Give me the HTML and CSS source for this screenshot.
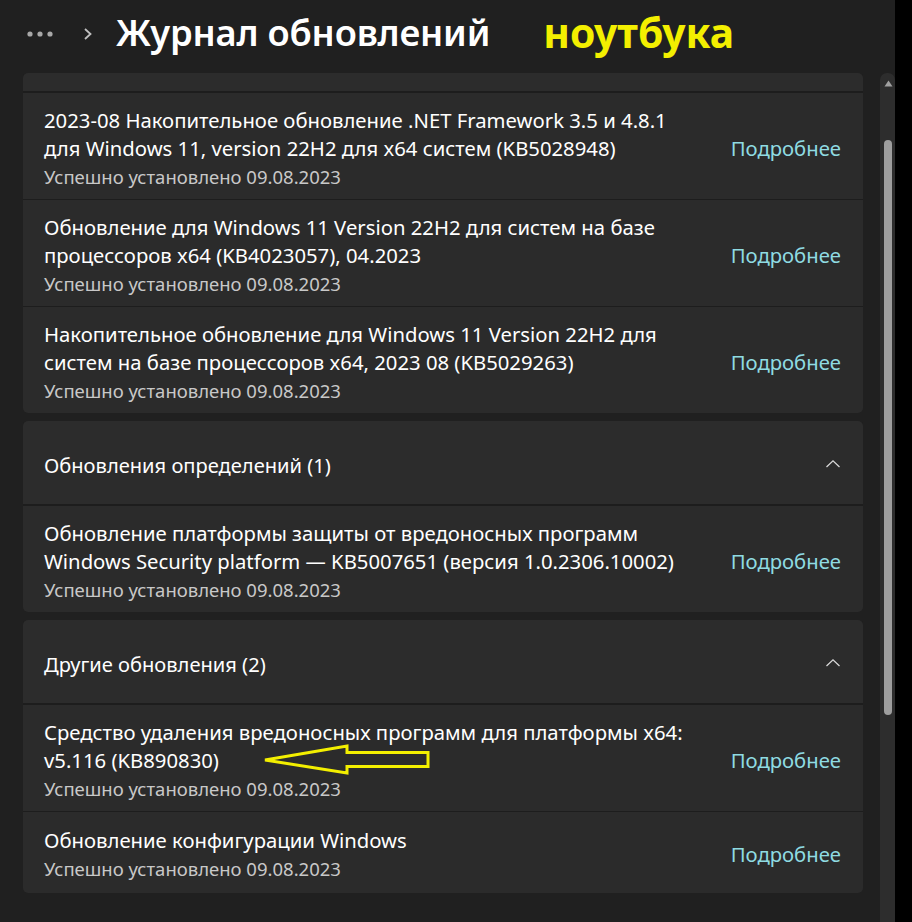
FILE: index.html
```html
<!DOCTYPE html>
<html lang="ru">
<head>
<meta charset="utf-8">
<title>Журнал обновлений</title>
<link rel="stylesheet" href="styles.css">
</head>
<body>
<div class="window">
  <div class="main">
    <header class="topbar">
      <svg class="dots" width="26" height="8" viewBox="0 0 26 8"><circle cx="3" cy="4" r="2.6"/><circle cx="13" cy="4" r="2.6"/><circle cx="23" cy="4" r="2.6"/></svg>
      <svg class="crumb" width="12" height="14" viewBox="0 0 12 14"><path d="M3 2 L8.5 7 L3 12" /></svg>
      <h1 class="title">Журнал обновлений</h1>
      <span class="note">ноутбука</span>
    </header>

    <div class="list">
      <section class="group">
        <div class="group-head partial"></div>
        <div class="row">
          <div class="info">
            <div class="name">2023-08 Накопительное обновление .NET Framework 3.5 и 4.8.1<br>для Windows 11, version 22H2 для x64 систем (KB5028948)</div>
            <div class="status">Успешно установлено 09.08.2023</div>
          </div>
          <a class="more">Подробнее</a>
        </div>
        <div class="row">
          <div class="info">
            <div class="name">Обновление для Windows 11 Version 22H2 для систем на базе<br>процессоров x64 (KB4023057), 04.2023</div>
            <div class="status">Успешно установлено 09.08.2023</div>
          </div>
          <a class="more">Подробнее</a>
        </div>
        <div class="row">
          <div class="info">
            <div class="name">Накопительное обновление для Windows 11 Version 22H2 для<br>систем на базе процессоров x64, 2023 08 (KB5029263)</div>
            <div class="status">Успешно установлено 09.08.2023</div>
          </div>
          <a class="more">Подробнее</a>
        </div>
      </section>

      <section class="group">
        <div class="group-head">
          <span class="head-text">Обновления определений (1)</span>
          <svg class="caret" width="16" height="10" viewBox="0 0 16 10"><path d="M1.5 8 L8 1.8 L14.5 8"/></svg>
        </div>
        <div class="row">
          <div class="info">
            <div class="name">Обновление платформы защиты от вредоносных программ<br>Windows Security platform — KB5007651 (версия 1.0.2306.10002)</div>
            <div class="status">Успешно установлено 09.08.2023</div>
          </div>
          <a class="more">Подробнее</a>
        </div>
      </section>

      <section class="group">
        <div class="group-head">
          <span class="head-text">Другие обновления (2)</span>
          <svg class="caret" width="16" height="10" viewBox="0 0 16 10"><path d="M1.5 8 L8 1.8 L14.5 8"/></svg>
        </div>
        <div class="row marked">
          <div class="info">
            <div class="name">Средство удаления вредоносных программ для платформы x64:<br>v5.116 (KB890830)</div>
            <div class="status">Успешно установлено 09.08.2023</div>
          </div>
          <a class="more">Подробнее</a>
          <svg class="arrow" width="170" height="34" viewBox="0 0 170 34"><polygon points="3,17 85,3 85,9.5 166,9.5 166,23.5 85,23.5 85,30"/></svg>
        </div>
        <div class="row short">
          <div class="info">
            <div class="name">Обновление конфигурации Windows</div>
            <div class="status">Успешно установлено 09.08.2023</div>
          </div>
          <a class="more">Подробнее</a>
        </div>
      </section>
    </div>
  </div>

  <div class="scrollbar">
    <div class="track">
      <svg class="up" width="9" height="7" viewBox="0 0 9 7"><polygon points="4.5,0.5 8.5,6.5 0.5,6.5"/></svg>
      <div class="thumb"></div>
    </div>
  </div>
  <div class="edge"></div>
</div>
</body>
</html>
```

FILE: styles.css
```css
* { box-sizing: border-box; }

html, body {
  margin: 0;
  padding: 0;
  background: #202020;
  height: 100%;
}

body {
  font-family: "Noto Sans", "Open Sans", sans-serif;
  color: #ffffff;
  overflow: hidden;
}

.window {
  display: flex;
  height: 922px;
  width: 912px;
}

.main {
  width: 880px;
  display: flex;
  flex-direction: column;
  background: #202020;
}

.topbar {
  height: 73px;
  display: flex;
  align-items: center;
  padding: 0 0 8px 27px;
}

.dots { fill: #a8a8a8; margin-top: 2px; }

.crumb {
  fill: none;
  stroke: #c0c0c0;
  stroke-width: 1.8;
  margin-left: 29px;
  margin-top: 3px;
}

.title {
  margin: 0 0 0 22px;
  font-size: 36.3px;
  font-weight: 600;
  letter-spacing: -0.2px;
  color: #ffffff;
  line-height: 1;
}

.note {
  margin-left: 53px;
  font-size: 40.8px;
  font-weight: 700;
  color: #f3ef00;
  line-height: 1;
}

.list {
  display: flex;
  flex-direction: column;
  gap: 8px;
  padding: 0 17px 0 23px;
}

.group {
  display: flex;
  flex-direction: column;
  gap: 1px;
  background: #1d1d1d;
  border-radius: 5px;
  overflow: hidden;
}

.group-head {
  height: 83px;
  background: #2c2c2c;
  display: flex;
  align-items: center;
  justify-content: space-between;
  padding: 6px 22px 0 21px;
  margin-bottom: 1px;
}

.group-head.partial {
  height: 18px;
}

.head-text {
  font-size: 20.1px;
  color: #ffffff;
}

.caret {
  fill: none;
  stroke: #d8d8d8;
  stroke-width: 1.3;
  margin-top: -4px;
}

.row {
  position: relative;
  background: #2b2b2b;
  min-height: 106px;
  display: flex;
  align-items: center;
  justify-content: space-between;
  padding: 11px 22px 8px 21px;
}

.row.short { min-height: 81px; }

.name {
  font-size: 20.3px;
  line-height: 28.5px;
  color: #ffffff;
  white-space: nowrap;
}

.status {
  font-size: 18.5px;
  line-height: 27px;
  color: #c8c8c8;
  white-space: nowrap;
}

.more {
  font-size: 20.3px;
  color: #8fdbe2;
  margin-top: 0;
}

.arrow {
  position: absolute;
  left: 239px;
  top: 38px;
  fill: none;
  stroke: #f3ef00;
  stroke-width: 3;
  stroke-linejoin: miter;
}

.scrollbar {
  width: 15px;
  padding-top: 73px;
  background: #202020;
}

.track {
  height: 100%;
  background: #2d2d2d;
  border-radius: 7px 7px 0 0;
  display: flex;
  flex-direction: column;
  align-items: center;
  padding-top: 7px;
}

.up { fill: #a0a0a0; margin-left: 1px; }

.thumb {
  width: 8px;
  height: 575px;
  margin-top: 53px;
  background: #9e9e9e;
  border-radius: 4px;
}

.edge {
  width: 17px;
  background: #000000;
}
```
